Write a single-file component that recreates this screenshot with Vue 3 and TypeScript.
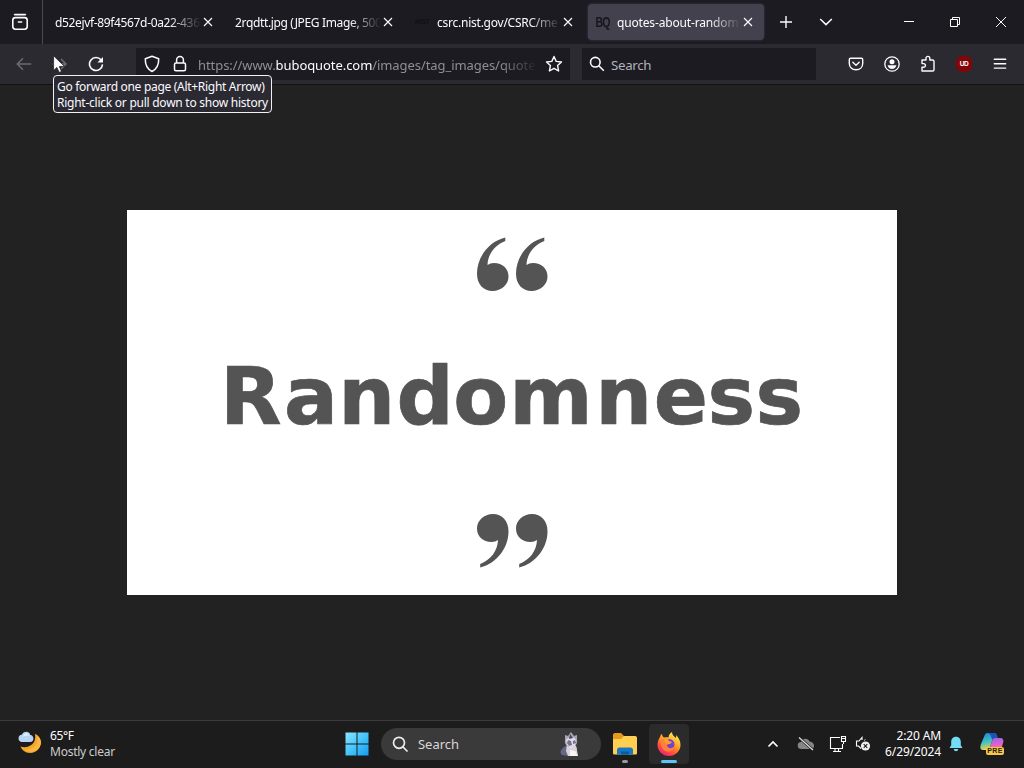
<script setup lang="ts">
interface Tab {
  title: string
  favicon?: 'nist' | 'bq'
  active?: boolean
}

const tabs: Tab[] = [
  { title: 'd52ejvf-89f4567d-0a22-436b' },
  { title: '2rqdtt.jpg (JPEG Image, 500 ×' },
  { title: 'csrc.nist.gov/CSRC/me', favicon: 'nist' },
  { title: 'quotes-about-random', favicon: 'bq', active: true },
]

// Left edge of each letter of the headline, for hand-kerned spacing
const headlineX = [92.9, 156.9, 211.3, 269.4, 326.3, 382.3, 468.3, 526.8, 580.5, 628.5].join(' ')
</script>

<template>
  <div class="screen">
    <header class="tabstrip">
      <div class="view">
        <svg width="18" height="18" viewBox="0 0 18 18" fill="none" stroke="#fbfbfe" stroke-width="1.6" stroke-linecap="round">
          <path d="M3.6 1.6h10.8" /><rect x="1.8" y="4.6" width="14.4" height="11.6" rx="2.6" /><path d="M7.4 9h3.2" />
        </svg>
      </div>
      <div class="tabs">
        <div v-for="tab in tabs" :key="tab.title" class="tab" :class="[{ active: tab.active }, tab.favicon && 'with-icon']">
          <span v-if="tab.favicon" class="favicon" :class="tab.favicon">{{ tab.favicon === 'bq' ? 'BQ' : 'NIST' }}</span>
          <span class="label">{{ tab.title }}</span>
          <svg class="close" width="10" height="10" viewBox="0 0 10 10" stroke="#fbfbfe" stroke-width="1.15"><path d="M1 1l8 8M9 1l-8 8" /></svg>
        </div>
      </div>
      <svg class="plus" width="14" height="14" viewBox="0 0 14 14" stroke="#fbfbfe" stroke-width="1.4"><path d="M7 1v12M1 7h12" /></svg>
      <svg class="chev" width="14" height="10" viewBox="0 0 14 10" fill="none" stroke="#fbfbfe" stroke-width="1.5"><path d="M1.2 2L7 7.6 12.8 2" /></svg>
      <div class="winbtns">
        <svg width="12" height="12" viewBox="0 0 12 12" stroke="#fff"><path d="M1 5.5h10" /></svg>
        <svg width="12" height="12" viewBox="0 0 12 12" fill="none" stroke="#fff"><path d="M1.5 3.5h7v7h-7zM3.5 3.5v-2h7v7h-2" /></svg>
        <svg width="12" height="12" viewBox="0 0 12 12" stroke="#fff"><path d="M1 1l10 10M11 1L1 11" /></svg>
      </div>
    </header>

    <nav class="toolbar">
      <div class="navbtns">
        <svg width="16" height="16" viewBox="0 0 16 16" fill="none" stroke="#6c6b73" stroke-width="1.5"><path d="M15.3 8H1.5M7 2.3L1.3 8 7 13.7" /></svg>
        <svg width="16" height="16" viewBox="0 0 16 16" fill="none" stroke="#6c6b73" stroke-width="1.5"><path d="M.7 8h13M9 3L14 8 9 13" /></svg>
        <svg width="16" height="16" viewBox="0 0 16 16" fill="none" stroke="#fbfbfe" stroke-width="1.6">
          <path d="M13.2 4.1A6.5 6.5 0 1 0 14.5 8.4" /><path d="M15 .9v5.6H9.4z" fill="#fbfbfe" stroke="none" />
        </svg>
      </div>
      <div class="urlbar">
        <svg width="16" height="18" viewBox="0 0 16 18" fill="none" stroke="#fbfbfe" stroke-width="1.5" stroke-linejoin="round"><path d="M8 1.3l6.7 2.5c.2 5.8-1.4 10-6.7 12.7C2.700 13.800 1.100 9.600 1.300 3.800z" /></svg>
        <svg class="lock" width="14" height="18" viewBox="0 0 14 18" fill="none" stroke="#fbfbfe" stroke-width="1.5"><rect x="1.500" y="8" width="11" height="7.800" rx="1.500" /><path d="M3.600 8V5a3.400 3.400 0 0 1 6.800 0v3" /></svg>
        <div class="url">https://www.<b>buboquote.com</b>/images/tag_images/quote</div>
        <svg class="star" width="18" height="18" viewBox="0 0 18 18" fill="none" stroke="#fbfbfe" stroke-width="1.4" stroke-linejoin="round"><path d="M9 1.500l2.200 4.900 5.300.6-3.900 3.600 1 5.400L9 13.300 4.400 16l1-5.400L1.500 7l5.300-.6z" /></svg>
      </div>
      <div class="searchbar">
        <svg width="16" height="16" viewBox="0 0 16 16" fill="none" stroke="#fbfbfe" stroke-width="1.6"><circle cx="6.300" cy="6.200" r="4.800" /><path d="M9.800 9.700l5 5" /></svg>
        <span>Search</span>
      </div>
      <div class="actions">
        <svg width="16" height="16" viewBox="0 0 16 16" fill="none" stroke="#fbfbfe" stroke-width="1.4" stroke-linecap="round" stroke-linejoin="round"><path d="M2.500 2.200h11c.8 0 1.200.4 1.200 1.200v4c0 4-2.700 6.400-6.700 6.400S1.300 11.400 1.300 7.400v-4c0-.8.4-1.200 1.200-1.200zM4.800 6.300L8 9.300l3.200-3" /></svg>
        <svg width="16" height="16" viewBox="0 0 16 16"><circle cx="8" cy="8" r="7.200" fill="none" stroke="#fbfbfe" stroke-width="1.300" /><circle cx="8" cy="5.800" r="2.500" fill="#fbfbfe" /><path d="M3.600 9.300h8.800c-.4 2.300-2.200 3.700-4.400 3.700s-4-1.400-4.400-3.700z" fill="#fbfbfe" /></svg>
        <svg width="16" height="18" viewBox="0 0 16 18" fill="none" stroke="#fbfbfe" stroke-width="1.400" stroke-linejoin="round"><path d="M2 5h4V3.300a1.900 1.900 0 0 1 3.800 0V5h2.700c1 0 1.500.5 1.500 1.500v8.200c0 .8-.5 1.300-1.300 1.300H2v-3.800h1.600a1.800 1.800 0 0 0 0-3.600H2z" /></svg>
        <span class="ublock">UD</span>
        <svg width="16" height="16" viewBox="0 0 16 16" stroke="#fbfbfe" stroke-width="1.400" stroke-linecap="round"><path d="M2.300 3.300h11.400M2.300 7.700h11.400M2.300 12.100h11.400" /></svg>
      </div>
      <div class="tooltip">
        <div class="t1">Go forward one page (Alt+Right Arrow)</div>
        <div class="t2">Right-click or pull down to show history</div>
      </div>
      <svg class="cursor" width="13" height="19" viewBox="0 0 13 19"><path d="M.6.8v14.700l3.300-3.100 2.300 5 2.300-1-2.200-4.900 5.200-.1z" fill="#fff" stroke="#16161a" stroke-width=".7" /></svg>
    </nav>

    <main class="viewer">
      <svg class="card" width="770" height="385" viewBox="0 0 770 385" fill="#545454">
        <rect width="770" height="385" fill="#fff" />
        <g v-for="dx in [0, 39]" :key="dx">
          <path :transform="`translate(${350 + dx} 27)`" d="M28.300 .5C11.500 4.500 0 20.500 0 36.500 0 47.500 6.500 54 15.500 54c9 0 16-6.500 16-14.500S25.500 26 17 26c-3 0-4.500.8-6.500 2C10.800 17 18 8 28.300 4z" />
          <path :transform="`translate(${381.500 + dx} 358) rotate(180)`" d="M28.300 .5C11.500 4.500 0 20.500 0 36.500 0 47.500 6.500 54 15.500 54c9 0 16-6.500 16-14.500S25.500 26 17 26c-3 0-4.500.8-6.500 2C10.800 17 18 8 28.300 4z" />
        </g>
        <text :x="headlineX" y="214" class="headline">Randomness</text>
      </svg>
    </main>

    <footer class="taskbar">
      <div class="weather">
        <svg width="26" height="26" viewBox="0 0 26 26">
          <path d="M18 3c9 4 7 19-5 19-5 0-8-3-9.500-6.500C11 18 20 13 18 3z" fill="#f6a62b" /><path d="M18 3c6 6 1 16-10 16 5 3 15 2 16-7 .3-4-2-7-6-9z" fill="#ffb83f" />
          <path d="M4.500 11a3.700 3.700 0 0 1 .3-7.300C6.500-.5 12.500 0 13.300 4c4 .2 4.200 7 0 7z" fill="#b9d5f5" /><path d="M6 5.500C7 1 12 1.500 12.500 5c-2-.8-4-.5-6.500.5z" fill="#e2efff" />
        </svg>
        <div><div class="deg">65°F</div><div class="cond">Mostly clear</div></div>
      </div>
      <svg class="start" width="24" height="24" viewBox="0 0 24 24">
        <defs><linearGradient id="win" x2="1" y2="1"><stop stop-color="#8be6ff" /><stop offset=".5" stop-color="#45c5fa" /><stop offset="1" stop-color="#149cf0" /></linearGradient></defs>
        <path d="M.5.500h11v11H.5zM12.500.500h11v11h-11zM.500 12.500h11v11H.500zM12.500 12.500h11v11h-11z" fill="url(#win)" />
      </svg>
      <div class="tsearch">
        <svg width="16" height="16" viewBox="0 0 16 16" fill="none" stroke="#eee" stroke-width="1.700"><circle cx="7" cy="6.800" r="5.500" /><path d="M11 11l4 4" stroke-linecap="round" /></svg>
        <span>Search</span>
        <svg class="pet" width="22" height="26" viewBox="0 0 22 26">
          <path d="M3 24c-4-3 1-8 5-10l5 3-3 8z" fill="#656789" /><path d="M8 13c5-2 10 0 10 6l1 6H9l-2-5z" fill="#d9d3dc" /><path d="M6 9L6 4l3 1 3-4 3 4 3-1v5c1 4-2 7-6 7s-7-3-6-7z" fill="#aaa3b6" /><path d="M7 9c2-3 8-4 10 0l-1 6-4 2-4-3z" fill="#e0dbe4" /><path d="M9 9l3 1 1 4-3 1-2-3zM16 9l-2 1v3l3-1z" fill="#77708e" /><path d="M11 3l3 4-4 1z" fill="#4b4860" /><path d="M11 19l5 1 3 5h-8z" fill="#f9f7f3" />
        </svg>
      </div>
      <div class="app">
        <svg width="26" height="24" viewBox="0 0 26 24"><path d="M1 3c0-1 .7-2 2-2h6l3 3h11c1 0 2 1 2 2v4H1z" fill="#e59a1c" /><path d="M1 7h8l3-3h11c1 0 2 1 2 2v15c0 1-.5 1.500-1.500 1.500h-21C1.500 22.500 1 22 1 21z" fill="#ffcf51" /><path d="M5 22.500V18c0-1.500 1-2.500 2.500-2.500h11c1.500 0 2.500 1 2.500 2.500v4.500z" fill="#1679c5" /><path d="M9 22.500v-3h8v3z" fill="#0d5a9d" /></svg>
        <i />
      </div>
      <div class="app current">
        <svg width="26" height="26" viewBox="0 0 26 26">
          <defs><linearGradient id="fx" x1=".8" y1="0" x2=".25" y2="1"><stop stop-color="#fff15a" /><stop offset=".4" stop-color="#ffac28" /><stop offset=".7" stop-color="#ff5538" /><stop offset="1" stop-color="#ee197c" /></linearGradient></defs>
          <path d="M4 6c.4-2 1.500-3 2-3 0 2 1 3 2 3.600 1.500-.5 3-.5 4.500 0C12.500 4 14 2 16 1c0 3 2 4 4 6 .3-1 .2-2 0-3 3 3 4.500 6 4.500 10C24.500 20 19.500 25 13 25S1.500 20 1.500 14C1.500 11 2.500 8 4 6z" fill="url(#fx)" />
          <circle cx="13" cy="13.500" r="5.500" fill="#7544c8" /><path d="M5 9c3-2 6-1 7 1l3 1c-1 2-3 2-4 3 0 4 5 4 8 1-1 6-8 7-11 4-2-2-4-6-3-10z" fill="#ff803a" /><path d="M8 7c3 0 4 1 5 3l3 1c-1 2-3 2-4 2-3 0-4-3-4-6z" fill="#ff9b31" />
        </svg>
        <i />
      </div>
      <div class="tray">
        <svg class="up" width="12" height="8" viewBox="0 0 12 8" fill="none" stroke="#fff" stroke-width="1.600"><path d="M1.500 6.500L6 2l4.500 4.500" /></svg>
        <svg class="cloud" width="18" height="16" viewBox="0 0 18 16"><path d="M4.500 13a3.500 3.500 0 0 1-.5-7C5 2 11 1.500 12.500 5.500 18 5.500 18.500 13 14 13z" fill="#858585" /><path d="M2 1.500L16 14" stroke="#1c1c1c" stroke-width="2.600" /><path d="M2 1.500L16 14" stroke="#ddd" stroke-width="1.300" /></svg>
        <svg class="net" width="18" height="18" viewBox="0 0 18 18" fill="none" stroke="#fff" stroke-width="1.100"><path d="M11 2.500H1.500v11h12V9M4 16.500h8M6 13.500v3M9.500 13.500v3M12.500 1.500h4v5h-4zM14.500 6.500V9M12.500 3.500h4" /></svg>
        <svg class="vol" width="16" height="16" viewBox="0 0 16 16"><path d="M7 4V1.500L4 5H1.500v5h2L6 12.500" fill="none" stroke="#fff" stroke-width="1.100" /><path d="M9 4.500l1.500-1" stroke="#ccc" /><circle cx="10.500" cy="10" r="4.600" fill="#eee" /><path d="M8.700 8.200l3.600 3.600M12.300 8.200l-3.600 3.600" stroke="#1c1c1c" stroke-width="1.100" /></svg>
        <div class="clock"><div class="time">2:20 AM</div><div class="date">6/29/2024</div></div>
        <svg class="bell" width="14" height="16" viewBox="0 0 14 16" fill="#74dcf4"><path d="M7 .7c3 0 4.800 2.200 4.800 5v3.500l1.700 2.800H.5l1.700-2.800V5.700c0-2.800 1.800-5 4.800-5zM4.700 13h4.600c-.4 3-4.200 3-4.600 0z" /></svg>
        <div class="copilot">
          <svg width="24" height="22" viewBox="0 0 24 22">
            <defs><linearGradient id="cpa" x2=".2" y2="1"><stop stop-color="#1a83dc" /><stop offset=".55" stop-color="#41bfc5" /><stop offset="1" stop-color="#dcd84d" /></linearGradient><linearGradient id="cpb" x2=".2" y2="1"><stop stop-color="#8964ef" /><stop offset=".5" stop-color="#df63cf" /><stop offset="1" stop-color="#ff8670" /></linearGradient></defs>
            <path d="M5 1.500C5.500.6 6.500 0 8 0h6c2 0 2.500 1.500 3 3l.5 2H15c-2 0-2.500 1-3 3l-2 6c-.6 2-2 3-4 3H3c-3 0-3-3-2-6z" fill="url(#cpa)" /><path d="M15 5h5c3 0 4 2 3 5l-2 7c-1 3-2 4-5 4H9c-2 0-3-2-3-4 2 0 3.400-1 4-3l2-6c.5-2 1-3 3-3z" fill="url(#cpb)" /><path d="M8 0h6c2 0 2.500 1.500 3 3l.5 2H15c-1 0-2 .5-2.500 1.500C11 5 11 1 8 0z" fill="#1b53bd" />
          </svg>
          <span>PRE</span>
        </div>
      </div>
    </footer>
  </div>
</template>

<style>
html, body { margin: 0; background: #222; overflow: hidden; }
</style>

<style scoped>
.screen { width: 1024px; height: 768px; display: flex; flex-direction: column; background: #222; color: #fbfbfe; font-family: "Noto Sans", "Open Sans", sans-serif; font-size: 12px; overflow: hidden; }
svg { display: block; flex: none; }
.tabstrip { height: 44px; flex: none; background: #1c1b22; display: flex; align-items: center; box-sizing: border-box; }
.view { width: 43px; height: 44px; border-right: 1px solid #4c4b52; display: flex; align-items: center; padding-left: 11px; box-sizing: border-box; flex: none; }
.tabs { display: flex; gap: 4px; padding-left: 5px; }
.tab { width: 176px; height: 36px; padding: 0 11.500px 0 7px; box-sizing: border-box; display: flex; align-items: center; border-radius: 4px; }
.tab.active { background: #42414d; box-shadow: 0 0 3px rgba(90, 90, 120, .5); }
.label { flex: 1; min-width: 0; overflow: hidden; white-space: nowrap; letter-spacing: -.35px; line-height: 18px; margin-top: 2px; mask-image: linear-gradient(to left, transparent, #000 32px); }
.with-icon .label { letter-spacing: -.24px; }
.active .label { letter-spacing: -.16px; }
.favicon { width: 22px; flex: none; line-height: 16px; }
.bq { font: bold 14px/16px "Liberation Sans", sans-serif; color: #17161e; letter-spacing: -1px; transform: scaleX(.75); transform-origin: 2px 50%; }
.nist { font: bold 6.500px/16px "Liberation Sans", sans-serif; color: #100f14; }
.close { margin-left: 2px; }
.plus { margin-left: 14.500px; }
.chev { margin-left: 26.500px; }
.winbtns { display: flex; gap: 34px; margin-left: auto; padding-right: 17px; }
.toolbar { height: 41px; flex: none; position: relative; background: #2b2a31; border-bottom: 1px solid #111115; display: flex; align-items: center; box-sizing: border-box; }
.navbtns { display: flex; gap: 20px; padding-left: 16px; width: 120px; flex: none; }
.urlbar { width: 434px; height: 32px; background: #1c1b22; display: flex; align-items: center; padding: 0 7px 0 8px; box-sizing: border-box; }
.lock { margin-left: 13px; }
.url { flex: 1; min-width: 0; margin: 1px 7px 0 11px; overflow: hidden; white-space: nowrap; font-size: 13px; line-height: 20px; letter-spacing: -.07px; color: #8f8e96; mask-image: linear-gradient(to left, transparent, #000 38px); }
.url b { color: #fbfbfe; font-weight: 400; }
.searchbar { margin-left: 12px; width: 234px; height: 32px; background: #1c1b22; display: flex; align-items: center; box-sizing: border-box; padding-left: 7px; gap: 6px; color: #b3b2b8; font-size: 13.300px; letter-spacing: -.3px; }
.searchbar span { margin-top: 2px; }
.actions { display: flex; align-items: center; gap: 20px; margin-left: 32px; }
.ublock { width: 16px; height: 16px; border-radius: 6px; background: #800609; color: #fff; font: bold 6.500px/15px "Liberation Sans", sans-serif; text-align: center; letter-spacing: -.4px; }
.tooltip { position: absolute; z-index: 2; left: 53px; top: 31px; width: 219px; height: 38px; border: 1px solid #f2f2f4; border-radius: 4px; background: #2b2a33; box-sizing: border-box; padding: 3px 0 0 3px; line-height: 16px; white-space: nowrap; }
.t1 { letter-spacing: -.3px; }
.t2 { letter-spacing: -.25px; }
.cursor { position: absolute; z-index: 3; left: 53px; top: 11px; }
.viewer { flex: 1; display: flex; align-items: center; justify-content: center; background: #222; }
.headline { font: bold 80px "DejaVu Sans", Verdana, sans-serif; stroke: #545454; stroke-width: .7px; }
.taskbar { height: 48px; flex: none; background: #1c1c1c; border-top: 1px solid #3b3b3b; box-sizing: border-box; display: flex; align-items: center; padding-bottom: 1px; }
.weather { display: flex; align-items: center; gap: 7px; padding-left: 17px; width: 344.500px; box-sizing: border-box; line-height: 16px; flex: none; }
.deg { letter-spacing: -.4px; color: #fff; }
.cond { letter-spacing: -.25px; color: #ccc; }
.start { margin-right: 12.500px; }
.tsearch { width: 220px; height: 32px; background: #3a3a3a; border-radius: 16px; display: flex; align-items: center; box-sizing: border-box; padding: 0 20px 0 11px; font-size: 13px; color: #d8d8d8; }
.tsearch span { margin-left: 10px; letter-spacing: -.02px; }
.pet { margin-left: auto; }
.app { width: 40px; height: 40px; display: flex; align-items: center; justify-content: center; position: relative; margin-left: 4px; flex: none; }
.app.current { background: #2b2b2b; border-radius: 4px; }
.app i { position: absolute; bottom: 1px; width: 6px; height: 3px; border-radius: 2px; background: #9a9a9a; }
.app.current i { width: 16px; background: #5dc2f5; }
.tray { display: flex; align-items: center; margin-left: auto; padding-right: 20px; }
.cloud { margin-left: 18px; }
.net { margin-left: 14px; }
.vol { margin-left: 8px; }
.clock { width: 70px; text-align: right; line-height: 16px; color: #fff; }
.time { letter-spacing: -.15px; }
.date { letter-spacing: -.12px; }
.bell { margin-left: 8px; }
.copilot { position: relative; margin-left: 17px; }
.copilot span { position: absolute; left: 6px; top: 14px; width: 18px; height: 8px; border-radius: 2px; background: #f8c64d; color: #2a2000; font: bold 7px/8px "Liberation Sans", sans-serif; text-align: center; letter-spacing: .4px; }
</style>
